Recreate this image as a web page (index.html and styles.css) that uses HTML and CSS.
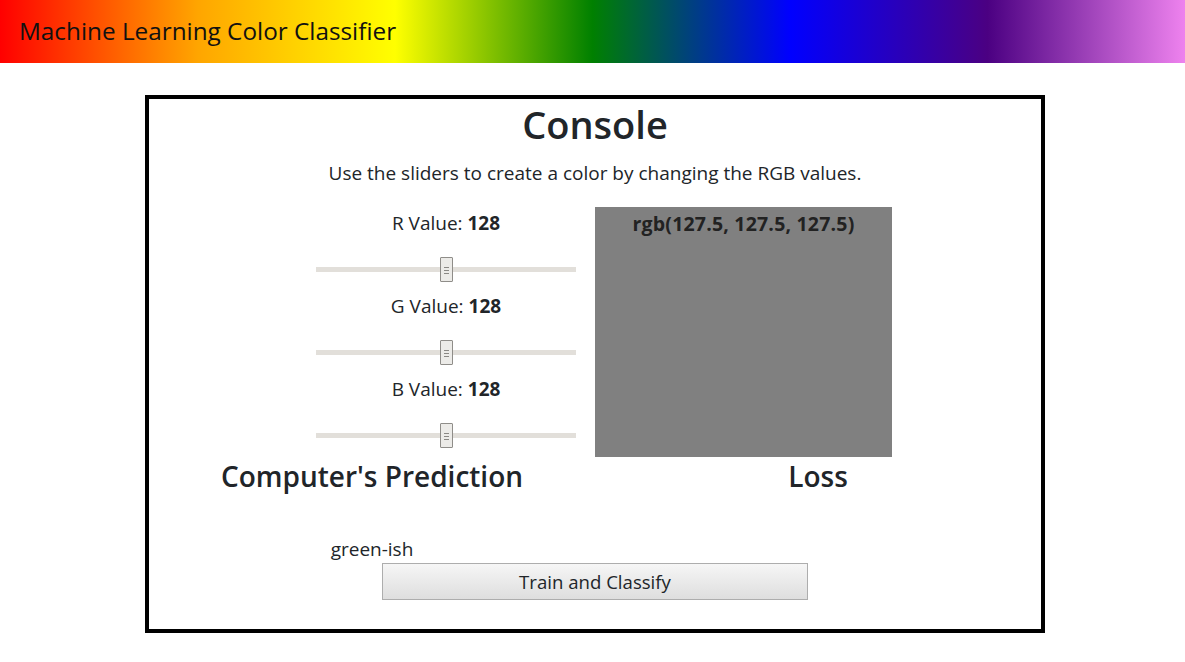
FILE: index.html
```html
<!DOCTYPE html>
<html lang="en">
<head>
<meta charset="utf-8">
<title>Machine Learning Color Classifier</title>
<link rel="stylesheet" href="styles.css">
</head>
<body>
<header class="topbar">
  <h1 class="app-title">Machine Learning Color Classifier</h1>
</header>
<main class="console">
  <h2 class="console-title">Console</h2>
  <p class="intro">Use the sliders to create a color by changing the RGB values.</p>
  <div class="controls">
    <div class="sliders">
      <div class="slider-group">
        <label class="slider-label" for="r">R Value: <b>128</b></label>
        <input class="slider" id="r" type="range" min="0" max="255" value="128">
      </div>
      <div class="slider-group">
        <label class="slider-label" for="g">G Value: <b>128</b></label>
        <input class="slider" id="g" type="range" min="0" max="255" value="128">
      </div>
      <div class="slider-group">
        <label class="slider-label" for="b">B Value: <b>128</b></label>
        <input class="slider" id="b" type="range" min="0" max="255" value="128">
      </div>
    </div>
    <div class="swatch">
      <span class="swatch-label">rgb(127.5, 127.5, 127.5)</span>
    </div>
  </div>
  <div class="results">
    <h3 class="result-title">Computer's Prediction</h3>
    <h3 class="result-title">Loss</h3>
    <div class="prediction">green-ish</div>
    <div class="loss"></div>
  </div>
  <button class="train-btn" type="button">Train and Classify</button>
</main>
</body>
</html>
```

FILE: styles.css
```css
* { box-sizing: border-box; }

body {
  margin: 0;
  font-family: "Open Sans", "Noto Sans", sans-serif;
  color: #212529;
  background: #fff;
}

.topbar {
  height: 63px;
  background: linear-gradient(to right, red, orange, yellow, green, blue, indigo, violet);
  display: flex;
  align-items: center;
  padding-left: 19px;
  padding-bottom: 2px;
}

.app-title {
  margin: 0;
  font-size: 24.3px;
  line-height: 30px;
  font-weight: 400;
  color: #111;
}

.console {
  width: 900px;
  height: 538px;
  margin: 32px 0 0 145px;
  border: 4px solid #000;
  padding: 3px 0 0;
  display: flex;
  flex-direction: column;
  align-items: center;
}

.console-title {
  margin: 0;
  font-size: 38px;
  line-height: 44px;
  font-weight: 600;
}

.intro {
  margin: 15px 0 0;
  font-size: 19px;
  line-height: 24px;
}

.controls {
  margin-top: 22px;
  display: flex;
  gap: 19px;
  padding-left: 18px;
}

.sliders {
  width: 260px;
  padding-top: 4px;
  display: flex;
  flex-direction: column;
}

.slider-group {
  display: flex;
  flex-direction: column;
  align-items: center;
  height: 83px;
}

.slider-label {
  font-size: 19px;
  line-height: 24px;
}

.slider-label b { font-weight: 700; }

.slider {
  -webkit-appearance: none;
  appearance: none;
  width: 260px;
  height: 25px;
  margin: 22px 0 0;
  padding: 0;
  background: transparent;
}

.slider::-webkit-slider-runnable-track {
  height: 5px;
  background: #e2dfda;
  border: none;
}

.slider::-webkit-slider-thumb {
  -webkit-appearance: none;
  width: 13px;
  height: 25px;
  margin-top: -10px;
  border: 1px solid #8f8d89;
  border-radius: 1px;
  background:
    linear-gradient(#8a8884, #8a8884) center 9px / 5px 1px no-repeat,
    linear-gradient(#8a8884, #8a8884) center 12px / 5px 1px no-repeat,
    linear-gradient(#8a8884, #8a8884) center 15px / 5px 1px no-repeat,
    #ecebe8;
}

.swatch {
  width: 297px;
  height: 250px;
  background: rgb(127.5, 127.5, 127.5);
  display: flex;
  justify-content: center;
  padding-top: 5px;
}

.swatch-label {
  font-size: 19.5px;
  line-height: 24px;
  font-weight: 700;
  letter-spacing: 0.2px;
  color: #222;
}

.results {
  width: 100%;
  display: grid;
  grid-template-columns: 1fr 1fr;
  grid-template-rows: 32px 45px 24px;
  justify-items: center;
}

.result-title {
  margin: 0;
  font-size: 28px;
  line-height: 32px;
  font-weight: 600;
}

.prediction {
  grid-row: 3;
  grid-column: 1;
  font-size: 19px;
  line-height: 24px;
}

.loss { grid-row: 3; grid-column: 2; }

.train-btn {
  margin-top: 2px;
  width: 426px;
  height: 37px;
  font-family: inherit;
  font-size: 18.6px;
  color: #212529;
  border: 1px solid #adadad;
  border-radius: 0;
  background: linear-gradient(#f6f6f6, #dedede);
  padding: 0;
}
```
